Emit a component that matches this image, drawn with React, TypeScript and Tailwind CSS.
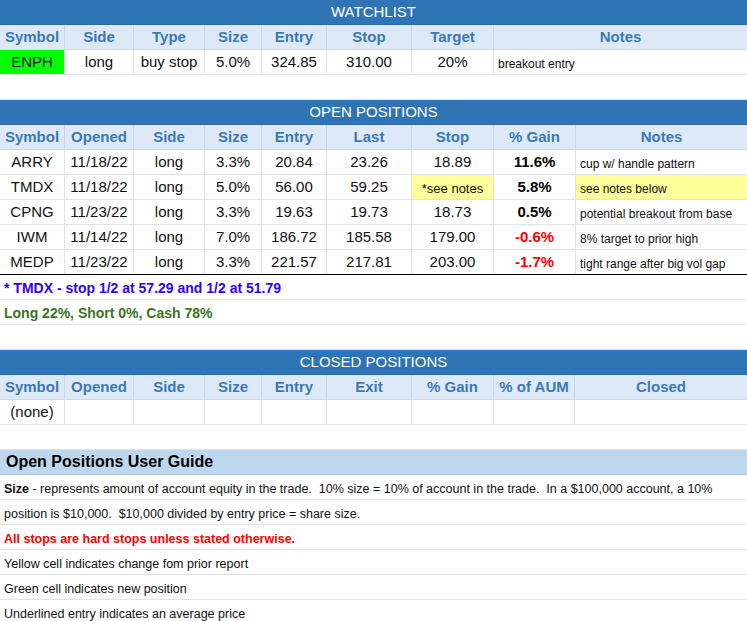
import React from "react";

const cols = "grid grid-cols-[65px_69px_71px_57px_65px_85px_82px_1fr]";
const colsPos = "grid grid-cols-[65px_69px_71px_57px_65px_85px_82px_82px_1fr]";
const colsClosed = "grid grid-cols-[65px_69px_71px_57px_65px_85px_82px_81px_1fr]";

function Title({ t }: { t: string }) {
  return <div className="h-[25px] bg-[#2f75b5] text-white text-[15px] flex items-center justify-center border-b border-[#2a6aa5]">{t}</div>;
}

function Header({ items, grid }: { items: string[]; grid: string }) {
  return (
    <div className={`${grid} h-[25px] bg-[#dde9f6]`}>
      {items.map((h, i) => (
        <div key={i} className="flex items-center justify-center font-bold text-[15px] text-[#3c79b8] border-r border-[#c9d7e6] border-b border-b-[#c9d7e6] last:border-r-0">{h}</div>
      ))}
    </div>
  );
}

type C = { t: string; cls?: string; left?: boolean };

function Row({ cells, grid }: { cells: C[]; grid: string }) {
  return (
    <div className={`${grid} h-[25px] border-b border-[#e2e2e2]`}>
      {cells.map((c, i) => (
        <div key={i} className={`flex items-center ${c.left ? "justify-start pl-1 text-[12px] pt-1" : "justify-center text-[15px]"} border-r border-[#e2e2e2] last:border-r-0 text-[#111] ${c.cls ?? ""}`}>{c.t}</div>
      ))}
    </div>
  );
}

const Blank = ({ children, cls = "" }: { children?: React.ReactNode; cls?: string }) => (
  <div className={`h-[25px] border-b border-[#e2e2e2] flex items-center px-1 whitespace-nowrap ${cls}`}>{children}</div>
);

export default function App() {
  const pos: [string, string, string, string, string, string, string, string, boolean][] = [
    ["ARRY", "11/18/22", "long", "3.3%", "20.84", "23.26", "18.89", "11.6%", false],
    ["TMDX", "11/18/22", "long", "5.0%", "56.00", "59.25", "*see notes", "5.8%", false],
    ["CPNG", "11/23/22", "long", "3.3%", "19.63", "19.73", "18.73", "0.5%", false],
    ["IWM", "11/14/22", "long", "7.0%", "186.72", "185.58", "179.00", "-0.6%", true],
    ["MEDP", "11/23/22", "long", "3.3%", "221.57", "217.81", "203.00", "-1.7%", true],
  ];
  const notes = ["cup w/ handle pattern", "see notes below", "potential breakout from base", "8% target to prior high", "tight range after big vol gap"];
  return (
    <div className="w-[747px] h-[621px] overflow-hidden bg-white font-[family-name:Liberation_Sans,Arial,sans-serif]">
      <Title t="WATCHLIST" />
      <Header grid={cols} items={["Symbol", "Side", "Type", "Size", "Entry", "Stop", "Target", "Notes"]} />
      <Row grid={cols} cells={[
        { t: "ENPH", cls: "bg-[#00ff00]" }, { t: "long" }, { t: "buy stop" }, { t: "5.0%" }, { t: "324.85" }, { t: "310.00" }, { t: "20%" }, { t: "breakout entry", left: true },
      ]} />
      <Blank />
      <Title t="OPEN POSITIONS" />
      <Header grid={colsPos} items={["Symbol", "Opened", "Side", "Size", "Entry", "Last", "Stop", "% Gain", "Notes"]} />
      {pos.map((p, i) => {
        const yellow = i === 1;
        const last = i === pos.length - 1;
        return (
          <div key={i} className={`${colsPos} h-[25px] ${last ? "border-b border-black" : "border-b border-[#e2e2e2]"}`}>
            {[p[0], p[1], p[2], p[3], p[4], p[5]].map((t, j) => (
              <div key={j} className="flex items-center justify-center text-[15px] text-[#111] border-r border-[#e2e2e2]">{t}</div>
            ))}
            <div className={`flex items-center justify-center border-r border-[#e2e2e2] ${yellow ? "bg-[#ffff99] text-[13px] pt-1" : "text-[15px]"} text-[#111]`}>{p[6]}</div>
            <div className={`flex items-center justify-center font-bold text-[15px] border-r border-[#e2e2e2] ${p[8] ? "text-[#ff0000]" : "text-black"}`}>{p[7]}</div>
            <div className={`flex items-center pl-1 pt-1 text-[12px] text-[#111] ${yellow ? "bg-[#ffff99]" : ""}`}>{notes[i]}</div>
          </div>
        );
      })}
      <Blank cls="text-[#3300ff] font-bold text-[14px] pt-0.5">* TMDX - stop 1/2 at 57.29 and 1/2 at 51.79</Blank>
      <Blank cls="text-[#38761d] font-bold text-[14px] pt-0.5">Long 22%, Short 0%, Cash 78%</Blank>
      <Blank />
      <Title t="CLOSED POSITIONS" />
      <Header grid={colsClosed} items={["Symbol", "Opened", "Side", "Size", "Entry", "Exit", "% Gain", "% of AUM", "Closed"]} />
      <Row grid={colsClosed} cells={[{ t: "(none)" }, { t: "" }, { t: "" }, { t: "" }, { t: "" }, { t: "" }, { t: "" }, { t: "" }, { t: "" }]} />
      <Blank />
      <div className="h-[25px] bg-[#bdd7ee] border-b border-[#a9c4dd] flex items-center px-1.5 font-bold text-[16px] text-black">Open Positions User Guide</div>
      <div className="font-[family-name:Liberation_Sans_Narrow,Liberation_Sans,sans-serif] text-[12.5px] text-[#111]">
        <Blank cls="pt-1"><span className="font-bold">Size</span>&nbsp;- represents amount of account equity in the trade.&nbsp; 10% size = 10% of account in the trade.&nbsp; In a $100,000 account, a 10%</Blank>
        <Blank cls="pt-1">position is $10,000.&nbsp; $10,000 divided by entry price = share size.</Blank>
        <Blank cls="pt-1 text-[#ff0000] font-bold">All stops are hard stops unless stated otherwise.</Blank>
        <Blank cls="pt-1">Yellow cell indicates change fom prior report</Blank>
        <Blank cls="pt-1">Green cell indicates new position</Blank>
        <Blank cls="pt-1">Underlined entry indicates an average price</Blank>
      </div>
    </div>
  );
}
